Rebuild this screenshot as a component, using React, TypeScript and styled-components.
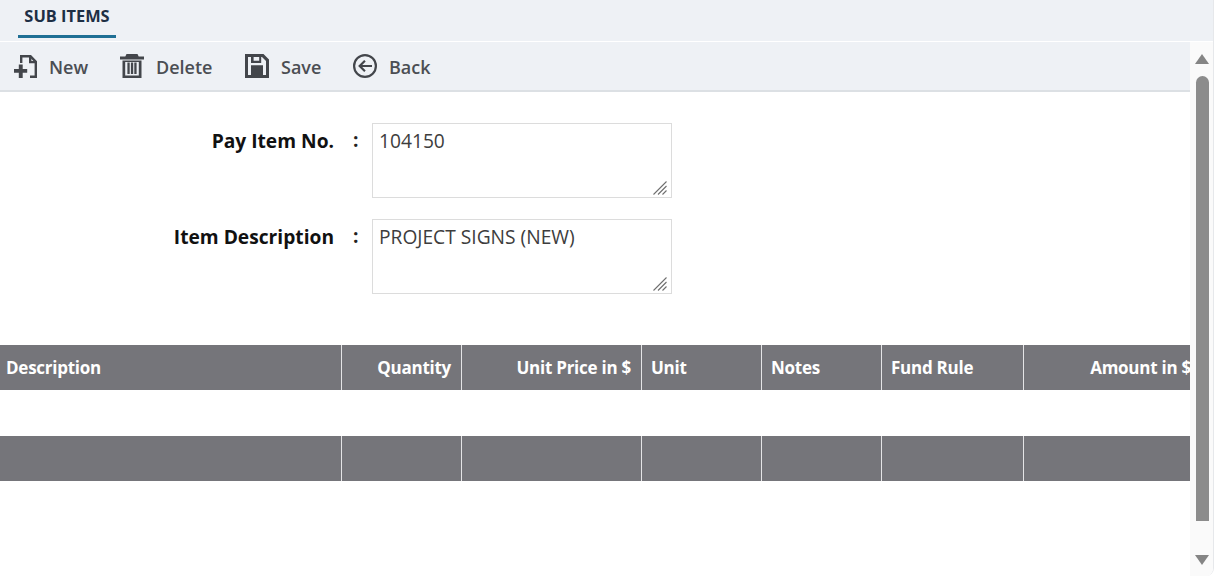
import React from "react";
import styled, { createGlobalStyle } from "styled-components";

const Global = createGlobalStyle`
  html, body { margin: 0; padding: 0; background: #fff; height: 100%; overflow: hidden; }
  body { font-family: "Open Sans", "Liberation Sans", sans-serif; }
  * { box-sizing: border-box; }
`;

const Page = styled.div`
  width: 1218px;
  height: 576px;
  background: #fff;
`;

const Shell = styled.div`
  width: 1214px;
  height: 576px;
  display: flex;
  flex-direction: column;
  border-right: 1px solid #e6e8eb;
  border-bottom-right-radius: 8px;
  overflow: hidden;
`;

const TabBar = styled.div`
  height: 41px;
  flex: none;
  background: #eef1f5;
  padding-left: 18px;
  display: flex;
  margin-bottom: 1px;
`;

const Tab = styled.div`
  width: 98px;
  height: 38px;
  border-bottom: 3px solid #1f6f94;
  text-align: center;
  font-size: 16.4px;
  font-weight: 700;
  line-height: 32px;
  color: #1d2f45;
  white-space: nowrap;
`;

const Body = styled.div`
  flex: 1;
  display: flex;
  min-height: 0;
`;

const Main = styled.div`
  width: 1190px;
  flex: none;
  overflow: hidden;
`;

const Toolbar = styled.div`
  height: 50px;
  background: #eef1f5;
  border-bottom: 2px solid #dce0e4;
  display: flex;
  align-items: center;
  padding-left: 14px;
`;

const ToolButton = styled.div<{ $w: number; $gap: number }>`
  width: ${(p) => p.$w}px;
  display: flex;
  align-items: center;
  gap: ${(p) => p.$gap}px;
  font-size: 18px;
  font-weight: 600;
  color: #4b4e53;
`;

const ToolLabel = styled.span`
  margin-top: 2px;
`;

const IconSvg = styled.svg`
  width: 24px;
  height: 24px;
  flex: none;
  fill: #43464b;
`;

const Form = styled.div`
  padding: 31px 0 0;
  display: flex;
  flex-direction: column;
  gap: 21px;
`;

const Row = styled.div`
  display: flex;
  height: 75px;
`;

const Label = styled.div`
  width: 334px;
  text-align: right;
  font-size: 19.2px;
  font-weight: 700;
  line-height: 36px;
  color: #111;
`;

const Colon = styled.div`
  width: 38px;
  padding-left: 19px;
  font-size: 19.2px;
  font-weight: 700;
  line-height: 34px;
  color: #222;
`;

const AreaWrap = styled.div`
  position: relative;
  width: 300px;
  height: 75px;
`;

const Area = styled.textarea`
  display: block;
  width: 300px;
  height: 75px;
  border: 1px solid #dcdcdc;
  padding: 4px 6px;
  margin: 0;
  font-family: "Open Sans", sans-serif;
  font-size: 19.2px;
  line-height: 26px;
  color: #3d3d3d;
  resize: none;
  outline: none;
  overflow: hidden;
`;

const Grip = styled.svg`
  position: absolute;
  right: 5px;
  bottom: 3px;
  width: 14px;
  height: 14px;
  stroke: #6f6f6f;
  stroke-width: 1.1;
  fill: none;
`;

const Grid = styled.div`
  margin-top: 51px;
  width: 1202px;
  display: grid;
  grid-template-columns: 342px 120px 180px 120px 120px 142px 178px;
`;

const HeadCell = styled.div<{ $right?: boolean }>`
  height: 45px;
  background: #75757a;
  border-right: 1px solid #e4e4e6;
  color: #fff;
  font-size: 17px;
  font-weight: 700;
  line-height: 45px;
  letter-spacing: -0.25px;
  padding: 0 10px 0 ${(p) => (p.$right ? 10 : 9)}px;
  text-align: ${(p) => (p.$right ? "right" : "left")};
  white-space: nowrap;

  &:first-child { padding-left: 6px; }
  &:last-child { border-right: 0; }
`;

const BlankRow = styled.div`
  grid-column: 1 / -1;
  height: 46px;
`;

const ScrollTrack = styled.div`
  width: 23px;
  flex: none;
  background: #fafafa;
  display: flex;
  flex-direction: column;
  align-items: center;
  padding: 12px 0 11px 1px;
`;

const Arrow = styled.div<{ $down?: boolean }>`
  flex: none;
  width: 0;
  height: 0;
  border-left: 7.5px solid transparent;
  border-right: 7.5px solid transparent;
  ${(p) => (p.$down ? "border-top: 10px solid #858585;" : "border-bottom: 10px solid #858585;")}
`;

const Thumb = styled.div`
  flex: none;
  width: 13px;
  height: 445px;
  margin-top: 12px;
  background: #8c8c8c;
  border-radius: 7px 7px 0 0;
`;

const Spacer = styled.div`
  flex: 1;
`;

const NewIcon = () => (
  <IconSvg viewBox="0 0 24 24">
    <path d="M6 9V1h11l6 6.2V24h-7v-2.4h4.6V8.2L16 3.4H8.4V9z" />
    <path d="M15 2.5h2.4v4.4h4.8v2.3H15z" />
    <path d="M4.8 10.5h3.9v4.4h4.5v3.8H8.7V24H4.8v-5.3H0v-3.8h4.8z" />
  </IconSvg>
);

const TrashIcon = () => (
  <IconSvg viewBox="0 0 24 24">
    <path d="M6.500 0h11l1.200 2.600H24v3H0v-3h5.300z" />
    <path d="M2.500 6.500h19V24h-19zM5.200 8v13.600h13.600V8z" fillRule="evenodd" />
    <path d="M7.400 8.500h2.300v11.500H7.400zM10.900 8.500h2.300v11.500h-2.300zM14.300 8.500h2.300v11.500h-2.300z" />
  </IconSvg>
);

const SaveIcon = () => (
  <IconSvg viewBox="0 0 24 24">
    <path
      fillRule="evenodd"
      d="M0 0h18.500L24 5.500V24H0zM3 3v18h3V11.500h12V21h3V7l-4-4h-.8v6H6V3zM8.600 3v3.800h5.600V3z"
    />
    <path fillRule="evenodd" d="M6 11.500h12V24H6zM10 15.500v4h4v-4z" />
  </IconSvg>
);

const BackIcon = () => (
  <IconSvg viewBox="0 0 24 24">
    <path
      fillRule="evenodd"
      d="M12 0a12 12 0 1 1 0 24 12 12 0 0 1 0-24zm0 2.200a9.800 9.800 0 1 0 0 19.600 9.800 9.800 0 0 0 0-19.600z"
    />
    <path d="M11.200 6l1.500 1.500-3.500 3.400H19v2.200H9.200l3.500 3.400-1.500 1.500-6.100-6z" />
  </IconSvg>
);

const GripLines = () => (
  <Grip viewBox="0 0 14 14">
    <path d="M0.500 13.500L13.500 0.500M5 13.500L13.500 5M9.500 13.500L13.500 9.500" />
  </Grip>
);

const columns: { title: string; right?: boolean }[] = [
  { title: "Description" },
  { title: "Quantity", right: true },
  { title: "Unit Price in $", right: true },
  { title: "Unit" },
  { title: "Notes" },
  { title: "Fund Rule" },
  { title: "Amount in $", right: true },
];

export default function App() {
  return (
    <Page>
      <Global />
      <Shell>
        <TabBar>
          <Tab>SUB ITEMS</Tab>
        </TabBar>
        <Body>
          <Main>
            <Toolbar>
              <ToolButton $w={106} $gap={11}><NewIcon /><ToolLabel>New</ToolLabel></ToolButton>
              <ToolButton $w={125} $gap={12}><TrashIcon /><ToolLabel>Delete</ToolLabel></ToolButton>
              <ToolButton $w={108} $gap={12}><SaveIcon /><ToolLabel>Save</ToolLabel></ToolButton>
              <ToolButton $w={100} $gap={12}><BackIcon /><ToolLabel>Back</ToolLabel></ToolButton>
            </Toolbar>
            <Form>
              <Row>
                <Label>Pay Item No.</Label>
                <Colon>:</Colon>
                <AreaWrap>
                  <Area readOnly defaultValue="104150" />
                  <GripLines />
                </AreaWrap>
              </Row>
              <Row>
                <Label>Item Description</Label>
                <Colon>:</Colon>
                <AreaWrap>
                  <Area readOnly defaultValue="PROJECT SIGNS (NEW)" />
                  <GripLines />
                </AreaWrap>
              </Row>
            </Form>
            <Grid>
              {columns.map((c) => (
                <HeadCell key={c.title} $right={c.right}>{c.title}</HeadCell>
              ))}
              <BlankRow />
              {columns.map((c) => (
                <HeadCell key={c.title} />
              ))}
            </Grid>
          </Main>
          <ScrollTrack>
            <Arrow />
            <Thumb />
            <Spacer />
            <Arrow $down />
          </ScrollTrack>
        </Body>
      </Shell>
    </Page>
  );
}
